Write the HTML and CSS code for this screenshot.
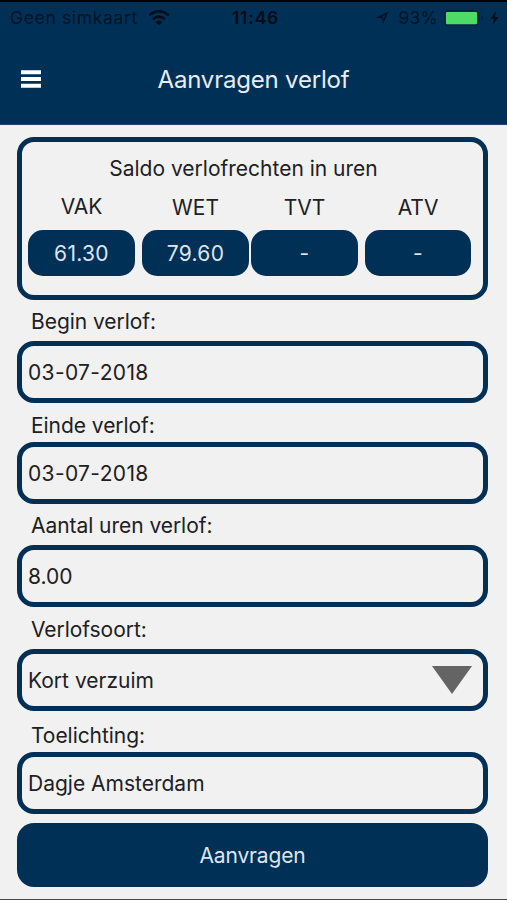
FILE: index.html
```html
<!DOCTYPE html>
<html lang="nl">
<head>
<meta charset="utf-8">
<title>Aanvragen verlof</title>
<link rel="stylesheet" href="styles.css">
</head>
<body>
<div class="screen">
  <header class="header">
    <div class="status">
      <div class="status-left">
        <span class="carrier">Geen simkaart</span>
        <svg class="wifi" width="22" height="16" viewBox="0 0 22 16"><path d="M1.2 5.4Q11-3.2 20.8 5.4" fill="none" stroke="#000d1a" stroke-width="2.6"/><path d="M5 9.3Q11 4 17 9.3" fill="none" stroke="#000d1a" stroke-width="2.6"/><path d="M7.7 12Q11 9.2 14.3 12L11 15.4Z" fill="#000d1a"/></svg>
      </div>
      <span class="time">11:46</span>
      <div class="status-right">
        <svg class="location" width="14" height="14" viewBox="0 0 14 14"><path d="M13.5.5 7.8 13.8 7 7.2.3 6.7Z" fill="#001428"/><path d="M10.2 4 8.7 8 8.3 6 6.2 5.9Z" fill="#003056"/></svg>
        <span class="percent">93%</span>
        <svg class="battery" width="42" height="16" viewBox="0 0 42 16"><rect x=".7" y=".7" width="34" height="14.6" rx="3.5" fill="none" stroke="#002140" stroke-width="1.4"/><rect x="2" y="2" width="31" height="12.2" rx="1" fill="#4cdb64"/><path d="M37.5 5.5Q40.5 8 37.5 10.5Z" fill="#002140"/></svg>
        <svg class="bolt" width="9" height="14" viewBox="0 0 9 14"><path d="M6 .3.4 7.8H4L2.8 13.7 8.7 6H5.1Z" fill="#000d1a"/></svg>
      </div>
    </div>
    <div class="nav">
      <svg class="menu" width="20" height="18" viewBox="0 0 20 18"><path d="M0 2.3H20M0 9H20M0 15.7H20" stroke="#fff" stroke-width="4"/></svg>
      <h1 class="title">Aanvragen verlof</h1>
    </div>
  </header>
  <main class="content">
    <section class="balance">
      <h2 class="balance-title">Saldo verlofrechten in uren</h2>
      <div class="balance-grid">
        <div class="balance-item"><span class="code code-first">VAK</span><span class="pill">61.30</span></div>
        <div class="balance-item"><span class="code">WET</span><span class="pill">79.60</span></div>
        <div class="balance-item"><span class="code">TVT</span><span class="pill">-</span></div>
        <div class="balance-item"><span class="code">ATV</span><span class="pill">-</span></div>
      </div>
    </section>
    <div class="label begin"><span>Begin verlof:</span></div>
    <div class="field"><span class="date">03-07-2018</span></div>
    <div class="label einde"><span>Einde verlof:</span></div>
    <div class="field"><span class="date">03-07-2018</span></div>
    <div class="label aantal"><span>Aantal uren verlof:</span></div>
    <div class="field"><span class="hours">8.00</span></div>
    <div class="label soort"><span>Verlofsoort:</span></div>
    <div class="field select"><span class="kind">Kort verzuim</span><svg width="40" height="28" viewBox="0 0 40 28"><path d="M0 0H40L20 28Z" fill="#646464"/></svg></div>
    <div class="label toelichting"><span>Toelichting:</span></div>
    <div class="field"><span class="note">Dagje Amsterdam</span></div>
    <button class="submit" type="button">Aanvragen</button>
  </main>
</div>
</body>
</html>
```
FILE: styles.css
```css
* { box-sizing: border-box; }
body {
  margin: 0;
  background: #f1f1f2;
  font-family: Inter, "Liberation Sans", sans-serif;
  font-size: 21px;
  color: #202022;
}
svg { display: block; flex: none; }
.screen {
  height: 900px;
  border-top: 2px solid #000306;
  border-bottom: 1px solid #4a4a4c;
  overflow: hidden;
}
.header {
  height: 123px;
  background: #003056;
  border-bottom: 1px solid #1d456c;
}
.status {
  display: grid;
  grid-template-columns: 1fr auto 1fr;
  align-items: center;
  height: 32px;
  padding: 0 8px 0 10px;
  font-size: 17.5px;
  line-height: 32px;
  color: #001428;
}
.status-left, .status-right { display: flex; align-items: center; }
.status-right { justify-content: flex-end; }
.carrier { letter-spacing: 0.65px; }
.wifi { margin-left: 10px; }
.time { font-weight: 600; color: #000d1a; letter-spacing: 0.8px; padding-left: 2px; }
.percent { margin: 0 6px 0 10px; letter-spacing: 0.2px; }
.bolt { margin-left: 4px; }
.nav {
  display: grid;
  grid-template-columns: 21px 1fr 21px;
  align-items: center;
  height: 90px;
}
.menu { grid-column: 2; grid-row: 1; }
.title {
  grid-column: 1 / -1;
  grid-row: 1;
  margin: 0;
  text-align: center;
  font-size: 24px;
  font-weight: 400;
  letter-spacing: -0.2px;
  color: #e6edf5;
}
.content { padding: 12px 19px 0 17px; }
.balance {
  height: 163px;
  border: 5px solid #003056;
  border-radius: 17px;
  padding: 14px 12px 0 6px;
}
.balance-title {
  margin: 0;
  padding-right: 12px;
  text-align: center;
  font-size: 21px;
  font-weight: 400;
  line-height: 25px;
}
.balance-grid {
  display: grid;
  grid-template-columns: 114px 109px 114px 106px;
}
.balance-item { display: flex; flex-direction: column; text-align: center; }
.code { width: 107px; height: 49px; line-height: 53px; }
.code-first { line-height: 52px; }
.pill {
  width: 107px;
  height: 46px;
  line-height: 48px;
  border-radius: 15px;
  background: #003056;
  color: #dce6ef;
  letter-spacing: 0.3px;
}
.balance-item:last-child .code, .balance-item:last-child .pill { width: 106px; }
.label { display: flex; align-items: center; padding-left: 14px; letter-spacing: -0.05px; }
.begin { height: 41px; padding-top: 2px; }
.einde { height: 39px; padding-top: 6px; }
.aantal { height: 41px; padding-top: 1px; }
.soort { height: 42px; padding-top: 3px; }
.toelichting { height: 41px; padding-top: 7px; }
.field {
  display: flex;
  align-items: center;
  justify-content: space-between;
  height: 62px;
  padding: 0 11px 0 6px;
  border: 5px solid #003056;
  border-radius: 17px;
}
.date { letter-spacing: 0.35px; }
.submit {
  display: block;
  width: 100%;
  height: 64px;
  margin: 9px 0 0;
  padding: 0;
  border: 0;
  border-radius: 17px;
  background: #003056;
  color: #dce6ef;
  font: inherit;
  letter-spacing: -0.15px;
}
```
